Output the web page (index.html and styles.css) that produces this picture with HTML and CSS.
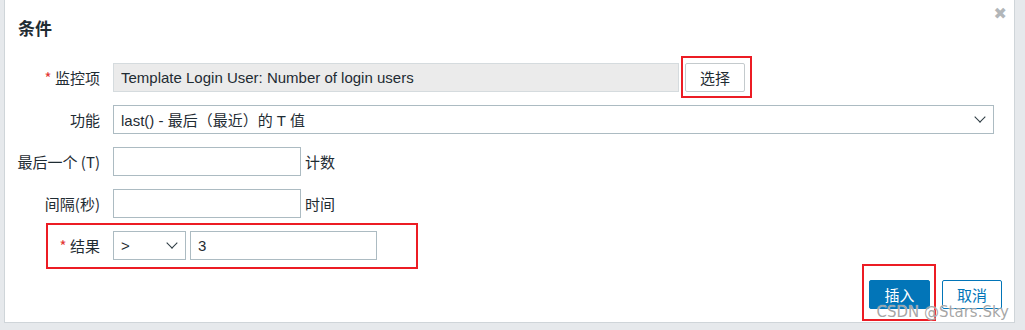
FILE: index.html
```html
<!DOCTYPE html>
<html lang="zh">
<head>
    <meta charset="UTF-8">
    <meta name="viewport" content="width=device-width, initial-scale=1.0">
    <title>条件</title>
    <link rel="stylesheet" href="styles.css">
</head>
<body>
    <div class="modal">
        <div class="modal-head">
            <h4>条件</h4>
            <button class="close" title="关闭">&#x2716;</button>
        </div>

        <div class="form">
            <div class="row">
                <label class="label"><span class="req">*</span> 监控项</label>
                <input class="field readonly item" type="text" value="Template Login User: Number of login users" readonly>
                <span class="mark mark-select"><button class="btn">选择</button></span>
            </div>

            <div class="row">
                <label class="label">功能</label>
                <div class="field select func">last() - 最后（最近）的 T 值<span class="chev"></span></div>
            </div>

            <div class="row">
                <label class="label">最后一个 (T)</label>
                <input class="field short" type="text">
                <span class="hint">计数</span>
            </div>

            <div class="row">
                <label class="label">间隔(秒)</label>
                <input class="field short" type="text">
                <span class="hint">时间</span>
            </div>

            <div class="row result">
                <label class="label"><span class="req">*</span> 结果</label>
                <div class="field select op">&gt;<span class="chev"></span></div>
                <input class="field value" type="text" value="3">
            </div>
        </div>

        <div class="modal-foot">
            <span class="mark mark-insert"><button class="btn primary">插入</button></span>
            <button class="btn alt">取消</button>
        </div>

        <div class="watermark">CSDN @Stars.Sky</div>
    </div>
</body>
</html>
```

FILE: styles.css
```css
body {
    margin: 0;
    background: #e6e9ec;
    font-family: "Liberation Sans", Arial, "Noto Sans CJK SC", sans-serif;
    color: #1f2c33;
    font-size: 15px;
}

.modal {
    position: relative;
    margin-left: 4px;
    width: 1011px;
    height: 323px;
    box-sizing: border-box;
    background: #fff;
    border: 1px solid #cfd5d9;
    border-top: none;
}

.modal-head {
    display: flex;
    justify-content: space-between;
    align-items: flex-start;
    height: 55px;
}

.modal-head h4 {
    margin: 16px 0 0 13px;
    font-family: "Noto Sans CJK SC", sans-serif;
    font-size: 17px;
    font-weight: bold;
    line-height: 24px;
    color: #1f2c33;
}

.close {
    margin: 4px 7px 0 0;
    padding: 0;
    border: none;
    background: none;
    color: #b2b6b9;
    font-family: "DejaVu Sans", sans-serif;
    font-size: 16px;
    line-height: 20px;
    cursor: pointer;
}

.form {
    display: flex;
    flex-direction: column;
    gap: 13px;
    margin-top: 8px;
}

.row {
    display: flex;
    align-items: center;
    height: 29px;
}

.label {
    width: 95px;
    margin-right: 13px;
    text-align: right;
    font-family: "Noto Sans CJK SC", sans-serif;
    font-size: 15px;
    color: #1f2c33;
    white-space: nowrap;
}

.req {
    color: #e33734;
}

.field {
    box-sizing: border-box;
    height: 29px;
    border: 1px solid #acbbc2;
    background: #fff;
    padding: 0 7px;
    font-family: "Liberation Sans", Arial, "Noto Sans CJK SC", sans-serif;
    font-size: 15px;
    color: #1f2c33;
    outline: none;
}

.readonly {
    background: #ebebeb;
    border-color: #d5dbde;
}

.item {
    width: 566px;
}

.select {
    display: flex;
    align-items: center;
    justify-content: space-between;
    padding-right: 9px;
}

.func {
    width: 881px;
}

.op {
    width: 73px;
    margin-right: 4px;
}

.value {
    width: 187px;
}

.chev {
    width: 7px;
    height: 7px;
    border-right: 1.5px solid #2b3a42;
    border-bottom: 1.5px solid #2b3a42;
    transform: translateY(-3px) rotate(45deg);
}

.short {
    width: 188px;
}

.hint {
    margin-left: 4px;
    font-family: "Noto Sans CJK SC", sans-serif;
}

.btn {
    box-sizing: border-box;
    height: 29px;
    width: 60px;
    border: 1px solid #c4cacd;
    border-radius: 2px;
    background: #fff;
    font-family: "Noto Sans CJK SC", sans-serif;
    font-size: 15px;
    color: #1f2c33;
    cursor: pointer;
}

.btn.primary {
    background: #0275b8;
    border-color: #0275b8;
    color: #fff;
    width: 61px;
}

.btn.alt {
    border-color: #0275b8;
    color: #0275b8;
}

.mark {
    position: relative;
    display: inline-flex;
}

.mark::after,
.result::after {
    content: "";
    position: absolute;
    border: 2px solid #ec1c24;
    pointer-events: none;
}

.mark-select {
    margin-left: 6px;
}

.mark-select::after {
    top: -7px;
    bottom: -6px;
    left: -4px;
    right: -7px;
}

.result {
    position: relative;
    width: 372px;
}

.result::after {
    top: -8px;
    bottom: -9px;
    left: 41px;
    right: -41px;
}

.modal-foot {
    display: flex;
    justify-content: flex-end;
    gap: 12px;
    margin-top: 20px;
    padding-right: 12px;
}

.mark-insert::after {
    top: -16px;
    bottom: -12px;
    left: -7px;
    right: -6px;
}

.watermark {
    position: absolute;
    right: 5px;
    bottom: 1px;
    font-family: "DejaVu Sans", sans-serif;
    font-size: 15px;
    color: rgba(150, 150, 150, 0.85);
    text-shadow: 0 0 1px #fff;
}
```
